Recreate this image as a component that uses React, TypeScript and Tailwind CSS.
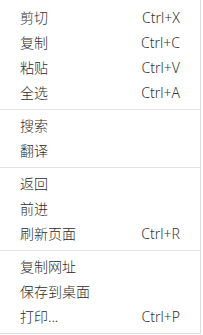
import React from "react";

type Item = { label: string; shortcut?: string };

const groups: Item[][] = [
  [
    { label: "剪切", shortcut: "Ctrl+X" },
    { label: "复制", shortcut: "Ctrl+C" },
    { label: "粘贴", shortcut: "Ctrl+V" },
    { label: "全选", shortcut: "Ctrl+A" },
  ],
  [{ label: "搜索" }, { label: "翻译" }],
  [{ label: "返回" }, { label: "前进" }, { label: "刷新页面", shortcut: "Ctrl+R" }],
  [{ label: "复制网址" }, { label: "保存到桌面" }, { label: "打印...", shortcut: "Ctrl+P" }],
];

function MenuRow({ label, shortcut }: Item) {
  return (
    <div className="flex h-[25px] items-center justify-between pl-5 pr-5 text-[14px] font-light text-[#2b2b2b]">
      <span>{label}</span>
      {shortcut && <span className="text-[#333]">{shortcut}</span>}
    </div>
  );
}

export default function App() {
  return (
    <div
      className="w-[201px] h-[334px] bg-white border-r border-b border-[#dcdcdc] pt-[5px]"
      style={{ fontFamily: '"Noto Sans", "Noto Sans CJK SC", sans-serif' }}
    >
      {groups.map((group, i) => (
        <div key={i}>
          {i > 0 && <div className="my-[3.5px] h-px bg-[#e3e3e3]" />}
          {group.map((item) => (
            <MenuRow key={item.label} {...item} />
          ))}
        </div>
      ))}
    </div>
  );
}
